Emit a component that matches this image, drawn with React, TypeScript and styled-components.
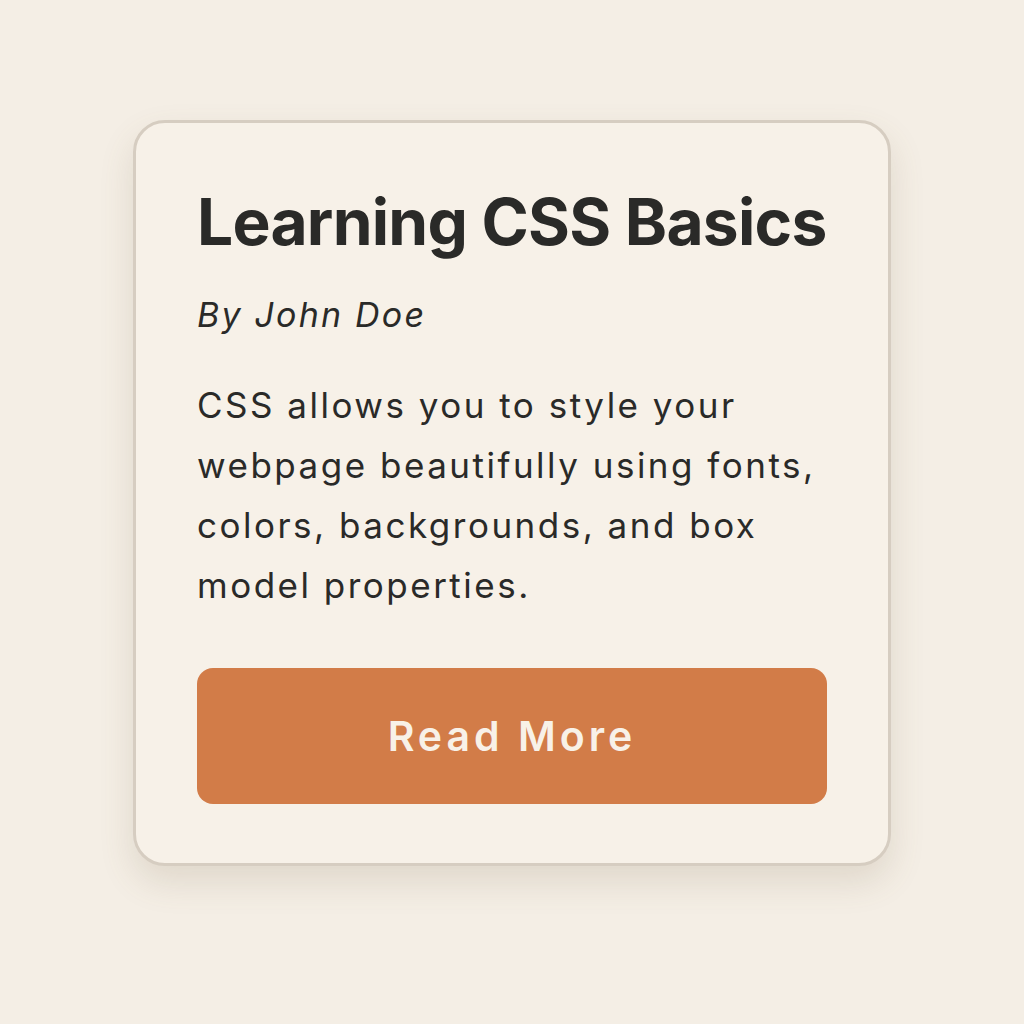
import React from "react";
import styled, { createGlobalStyle } from "styled-components";

const GlobalStyle = createGlobalStyle`
  html, body {
    margin: 0;
    padding: 0;
    background: #f4eee5;
  }
  body {
    font-family: Inter, "Noto Sans", sans-serif;
    color: #2a2a28;
  }
`;

const Page = styled.div`
  box-sizing: border-box;
  min-height: 100vh;
  display: flex;
  justify-content: center;
  align-items: flex-start;
  padding-top: 120px;
`;

const Card = styled.article`
  box-sizing: border-box;
  width: 758px;
  padding: 61px 61px 59px;
  background: #f7f1e8;
  border: 3px solid #d6cdc1;
  border-radius: 32px;
  box-shadow: 0 16px 34px rgba(120, 100, 70, 0.16);
  display: flex;
  flex-direction: column;
`;

const Title = styled.h1`
  margin: 0;
  font-size: 64px;
  line-height: 1.2;
  font-weight: 700;
  letter-spacing: -0.75px;
  white-space: nowrap;
  color: #2a2a28;
`;

const Byline = styled.p`
  margin: 32px 0 0;
  font-size: 34px;
  line-height: 44px;
  font-style: italic;
  font-weight: 400;
  letter-spacing: 2.2px;
  color: #2a2a28;
`;

const Body = styled.p`
  margin: 38px 0 0;
  font-size: 35px;
  line-height: 60px;
  letter-spacing: 2.5px;
  color: #2a2a28;
`;

const Button = styled.button`
  margin-top: 53px;
  height: 136px;
  border: none;
  border-radius: 16px;
  background: #d27c48;
  color: #f8f1e8;
  font-family: Inter, "Noto Sans", sans-serif;
  font-size: 41px;
  font-weight: 600;
  letter-spacing: 4px;
  cursor: pointer;
`;

export default function App() {
  return (
    <>
      <GlobalStyle />
      <Page>
        <Card>
          <Title>Learning CSS Basics</Title>
          <Byline>By John Doe</Byline>
          <Body>
            CSS allows you to style your webpage beautifully using fonts,
            colors, backgrounds, and box model properties.
          </Body>
          <Button>Read More</Button>
        </Card>
      </Page>
    </>
  );
}
